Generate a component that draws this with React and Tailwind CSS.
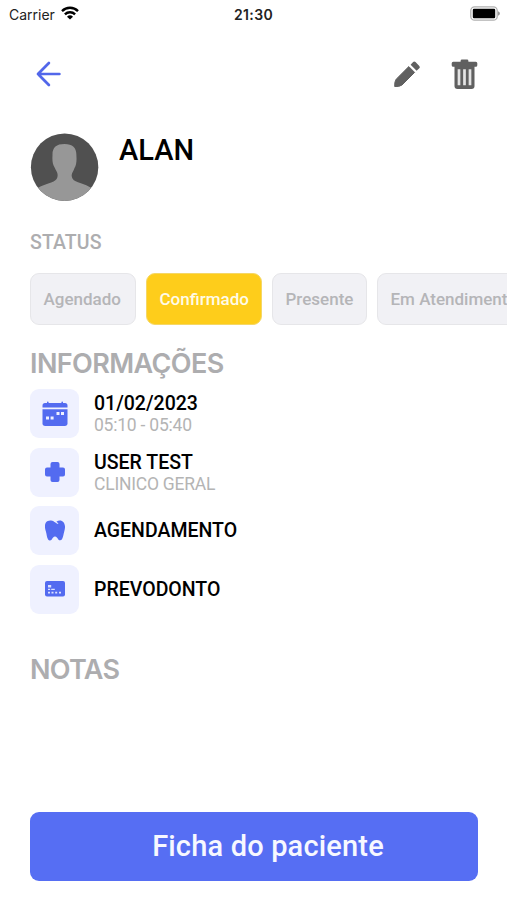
function StatusBar() {
  return (
    <div className="flex h-7 items-center justify-between px-[7px] font-['Inter',sans-serif] text-[14px] text-[#222]">
      <div className="flex w-[120px] items-center gap-[6px] pl-[2px]">
        <span>Carrier</span>
        <svg width="18" height="14" viewBox="0 0 18 14" fill="none" stroke="#000" strokeWidth="2.4" className="mb-[3px]">
          <path d="M1 5.1a11.4 11.4 0 0 1 16 0" />
          <path d="M3.9 8.3a7.3 7.3 0 0 1 10.2 0" />
          <path d="M9 13.6 6 10.7a4.4 4.4 0 0 1 6 0z" fill="#000" stroke="none" />
        </svg>
      </div>
      <span className="font-semibold tracking-[0.4px]">21:30</span>
      <div className="flex w-[120px] justify-end">
        <svg width="30" height="15" viewBox="0 0 30 15" className="mb-[2px]">
          <rect x="0.8" y="0.8" width="26.4" height="13.4" rx="3.8" fill="#fff" stroke="#b0b0b0" strokeWidth="1.3" />
          <rect x="2.8" y="2.8" width="22.4" height="9.4" rx="1.2" fill="#000" />
          <path d="M28 5.3c2.500.8 2.500 3.600 0 4.400z" fill="#999" />
        </svg>
      </div>
    </div>
  );
}

function Header() {
  return (
    <header className="flex h-[92px] items-center pl-[36px] pr-[29px]">
      <svg width="26" height="26" viewBox="0 0 26 26" fill="none" stroke="#5267ea" strokeWidth="2.7" strokeLinecap="round" strokeLinejoin="round">
        <path d="M23.400 13H2M12.900 2 2 13l10.900 11" />
      </svg>
      <svg className="ml-auto" width="28" height="28" viewBox="0 0 28 28" fill="#606060">
        <path d="M1.700 26.500Q1.200 22 3.200 19.200L15.800 6.600l5.800 5.800L9 25Q6 27 1.700 26.500z" stroke="#606060" strokeWidth="1" strokeLinejoin="round" />
        <path d="m17.600 4.800 2.500-2.700q1.200-1.200 2.400 0l3.800 3.800q1.200 1.200 0 2.400l-2.700 2.500z" />
      </svg>
      <svg className="ml-[30px]" width="27" height="31" viewBox="0 0 27 31">
        <path d="M9.600 2.700V2q0-1.400 1.400-1.400h5Q17.400.6 17.400 2v.7h7.400q1.500 0 1.500 1.500v2q0 1.500-1.500 1.500H2.200Q.7 7.700.7 6.200V4.200q0-1.500 1.500-1.500z" fill="#606060" />
        <path d="M3.500 7h20v20q0 3-3 3h-14q-3 0-3-3z" fill="#606060" />
        <path d="M8 10.200v16M13.500 10.200v16M19 10.200v16" stroke="#e4e4e4" strokeWidth="2.700" />
      </svg>
    </header>
  );
}

function Avatar() {
  return (
    <svg width="69" height="68" viewBox="0 0 69 68">
      <defs>
        <clipPath id="avatar-circle">
          <circle cx="34.600" cy="34.200" r="33.700" />
        </clipPath>
      </defs>
      <g clipPath="url(#avatar-circle)">
        <rect width="69" height="68" fill="#505050" />
        <path d="M34.500 11c-8.300 0-12.300 3.500-12 11.500-.4 5 .2 9.200 2.100 12 1.200 3 3.200 5 3 7.500.2 3-1 5-4 6.600C17 51.500 12.500 52.200 7 55.500v15h55v-15c-5-3.600-10-4.300-16.300-7.200-3-1.600-4.200-3.600-4-6.400.2-2.500 2-4 2.800-7 1.900-2.800 2.300-7.500 1.900-12.200.2-8-3.600-11.700-11.900-11.700z" fill="#979797" />
      </g>
    </svg>
  );
}

const statuses = [
  { label: "Agendado", style: "w-[106px] border-[#e6e6e9] bg-[#f1f1f5] text-[#b5b5b8]" },
  { label: "Confirmado", style: "w-[116px] border-[#f5d766] bg-[#fecd1b] text-[#fffbe8]" },
  { label: "Presente", style: "w-[95px] border-[#e6e6e9] bg-[#f1f1f5] text-[#b5b5b8]" },
  { label: "Em Atendimento", style: "w-[156px] border-[#e6e6e9] bg-[#f1f1f5] text-[#b5b5b8]" },
];

function CalendarIcon() {
  return (
    <svg width="26" height="26" viewBox="0 0 26 26" fill="#536bf0">
      <path d="M.5 6.500V4.500Q.5 2 3 2h2V1.300q0-.8.8-.8t.8.8V2h12.800v-.7q0-.8.8-.8t.8.8V2h2q2.500 0 2.500 2.500v2z" />
      <path d="M.5 8.300h25v14q0 2.700-2.700 2.700H3.200Q.5 25 .5 22.300z" />
      <path d="M4 15.400h3v3H4zM8.600 15.400h3v3h-3zM14.500 11h3v3h-3zM19 11h3v3h-3z" fill="#eff1ff" />
    </svg>
  );
}

function CrossIcon() {
  return (
    <svg width="20" height="20" viewBox="0 0 20 20" fill="#536bf0">
      <path d="M7.500 0h5q2 0 2 2v3.500H18q2 0 2 2v5q0 2-2 2h-3.500V18q0 2-2 2h-5q-2 0-2-2v-3.500H2q-2 0-2-2v-5q0-2 2-2h3.500V2q0-2 2-2z" />
    </svg>
  );
}

function ToothIcon() {
  return (
    <svg width="20" height="21" viewBox="0 0 20 21">
      <path d="M5.300.5C7.500.2 8.600 1.300 10 2.300c1 .8 1.800 1.400 3 1.600l.3-.9c-.8-.2-1.400-.6-1.900-1.200C13.500.2 16.500 0 18.500 2.200c2.200 3 1.600 6.600.7 9.500-.8 2.500-1 5.300-2.200 7.600-1 1.500-2.700 1.300-3.700.1-1.100-1.400-1.700-2.800-3.300-2.800s-2.200 1.400-3.200 2.800c-1 1.300-2.800 1.500-3.700.1C1.800 17.200 1.700 14.200.9 11.500 0 8.500-.8 5.300.9 2.500 2 1 3.500.6 5.300.5z" fill="#536bf0" />
    </svg>
  );
}

function CardIcon() {
  return (
    <svg width="20" height="16" viewBox="0 0 20 16">
      <rect width="20" height="15.500" rx="2" fill="#536bf0" />
      <path d="M3 4h3.200v2.500H3zM3 7.800h2.200v1.200H3zM6.200 7.800h3.600v1.200H6.200zM3 10.700h2v1.800H3zM6.500 10.700h2v1.800h-2zM10.200 10.700h2v1.800h-2zM14 10.700h2v1.800h-2z" fill="#dce2ff" />
    </svg>
  );
}

const details = [
  { icon: <CalendarIcon />, title: "01/02/2023", subtitle: "05:10 - 05:40" },
  { icon: <CrossIcon />, title: "USER TEST", subtitle: "CLINICO GERAL" },
  { icon: <ToothIcon />, title: "AGENDAMENTO" },
  { icon: <CardIcon />, title: "PREVODONTO" },
];

export default function App() {
  return (
    <main className="flex h-[900px] w-full flex-col overflow-hidden bg-white font-['Roboto',sans-serif]">
      <StatusBar />
      <Header />
      <section className="mt-[13px] flex h-[68px] gap-[20px] pl-[30px]">
        <Avatar />
        <h1 className="text-[29px] font-medium leading-[34px] text-black">ALAN</h1>
      </section>
      <h2 className="mt-[30px] pl-[30px] text-[19.500px] font-medium leading-6 tracking-[0.100px] text-[#adadaf]">STATUS</h2>
      <div className="mt-[18px] flex gap-[10px] overflow-hidden pl-[30px]">
        {statuses.map((s) => (
          <div key={s.label} className={`flex h-[52px] shrink-0 items-center whitespace-nowrap rounded-[9px] border pl-[12.500px] pt-px text-[17px] font-medium ${s.style}`}>
            {s.label}
          </div>
        ))}
      </div>
      <h2 className="mt-[23px] pl-[30px] font-['Inter',sans-serif] text-[27px] font-semibold leading-8 tracking-[-0.600px] text-[#adadaf]">INFORMAÇÕES</h2>
      <ul className="mt-[9px] flex flex-col gap-[9.600px] pl-[30px]">
        {details.map((d) => (
          <li key={d.title} className="flex h-[49px] items-center gap-[15px]">
            <div className="flex size-[49px] items-center justify-center rounded-[9px] bg-[#eff1ff]">{d.icon}</div>
            <div>
              <p className="text-[19.500px] font-medium leading-[23px] text-black">{d.title}</p>
              {d.subtitle && <p className="text-[17.500px] leading-5 tracking-[-0.220px] text-[#b4b4b4]">{d.subtitle}</p>}
            </div>
          </li>
        ))}
      </ul>
      <h2 className="mt-[40px] pl-[30px] font-['Inter',sans-serif] text-[27px] font-semibold leading-8 tracking-[-0.700px] text-[#adadaf]">NOTAS</h2>
      <button className="mx-[30px] mb-[19px] mt-auto h-[69px] w-[448px] rounded-[9px] bg-[#566ef3] pl-[28px] text-[29px] font-medium tracking-[0.170px] text-[#f7f8ff]">
        Ficha do paciente
      </button>
    </main>
  );
}
